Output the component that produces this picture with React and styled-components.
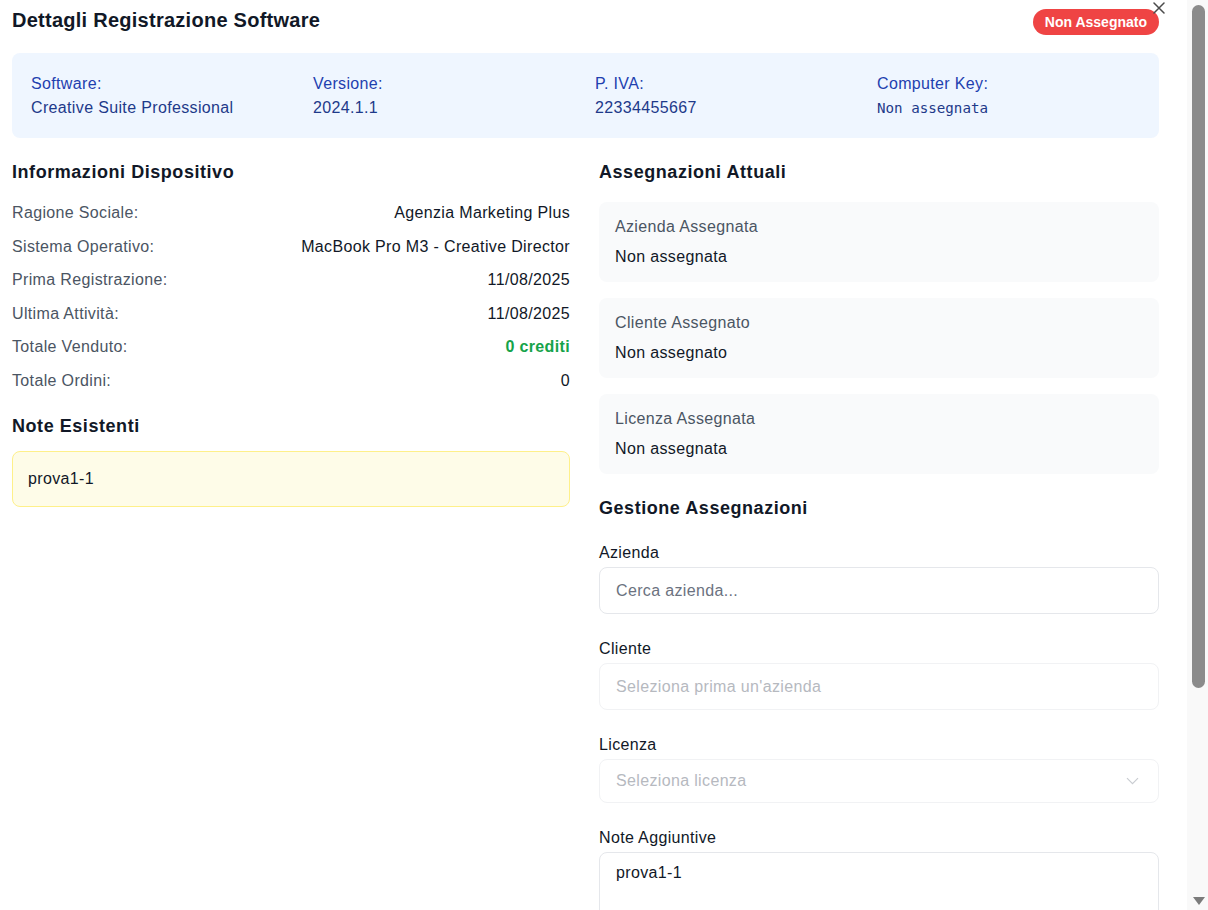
import React from "react";
import styled, { createGlobalStyle } from "styled-components";

const GlobalStyle = createGlobalStyle`
  html, body {
    margin: 0;
    padding: 0;
    background: #fff;
  }
  body {
    font-family: "Liberation Sans", Arial, sans-serif;
    font-size: 16px;
    letter-spacing: 0.35px;
    color: #111827;
  }
  * {
    box-sizing: border-box;
  }
`;

const Page = styled.div`
  display: flex;
  height: 100vh;
  overflow: hidden;
  background: #fff;
`;

const Main = styled.div`
  flex: 1;
  overflow: hidden;
`;

const ScrollTrack = styled.div`
  width: 21px;
  display: flex;
  flex-direction: column;
  align-items: center;
  padding: 5px 0 5px 2px;
  background: #f9f9f9;
`;

const ScrollThumb = styled.div`
  width: 13px;
  height: 683px;
  border-radius: 7px;
  background: #8b8b8b;
`;

const ScrollArrow = styled.div`
  margin-top: auto;
  width: 0;
  height: 0;
  border-left: 6.5px solid transparent;
  border-right: 6.5px solid transparent;
  border-top: 8px solid #7b7b7b;
`;

const Dialog = styled.div`
  position: relative;
  width: 1147px;
  margin-left: 12px;
  padding: 6px 0 120px;
`;

const Header = styled.div`
  display: flex;
  align-items: center;
  justify-content: space-between;
  height: 28px;
`;

const Title = styled.h2`
  margin: 0;
  font-size: 20px;
  line-height: 28px;
  font-weight: 700;
  letter-spacing: 0.26px;
  color: #111827;
`;

const Badge = styled.span`
  margin-top: 3px;
  padding: 3px 12px;
  border-radius: 999px;
  background: #ef4444;
  color: #fff;
  font-size: 14px;
  line-height: 20px;
  font-weight: 700;
  letter-spacing: 0;
`;

const Close = styled.button`
  position: absolute;
  top: 2px;
  right: -6px;
  width: 12px;
  height: 12px;
  padding: 0;
  border: 0;
  background: transparent;
  color: #4b4b4b;
  cursor: pointer;
  svg {
    display: block;
  }
`;

const InfoBox = styled.div`
  margin-top: 19px;
  display: grid;
  grid-template-columns: repeat(4, 1fr);
  gap: 16px;
  padding: 19px 16px 18px 19px;
  background: #eff6ff;
  border-radius: 8px;
`;

const InfoLabel = styled.div`
  color: #1e40af;
  line-height: 24px;
`;

const InfoValue = styled.div`
  color: #1e3a8a;
  line-height: 24px;
  letter-spacing: ${(p) => (p.$mono ? "0" : "0.35px")};
  font-family: ${(p) =>
    p.$mono ? '"DejaVu Sans Mono", "Liberation Mono", monospace' : "inherit"};
  font-size: ${(p) => (p.$mono ? "14.2px" : "16px")};
`;

const Columns = styled.div`
  margin-top: 20px;
  display: grid;
  grid-template-columns: 558px 560px;
  column-gap: 29px;
  align-items: start;
`;

const Column = styled.div`
  display: flex;
  flex-direction: column;
`;

const SectionTitle = styled.h3`
  margin: ${(p) => p.$mt || "0"} 0 ${(p) => p.$mb || "16px"};
  font-size: 18px;
  line-height: 28px;
  font-weight: 700;
  letter-spacing: 0.55px;
  color: #111827;
`;

const Rows = styled.div`
  display: flex;
  flex-direction: column;
  gap: 9.6px;
`;

const Row = styled.div`
  display: flex;
  justify-content: space-between;
  line-height: 24px;
`;

const RowLabel = styled.span`
  color: #4b5563;
`;

const RowValue = styled.span`
  color: ${(p) => (p.$green ? "#16a34a" : "#111827")};
  font-weight: ${(p) => (p.$green ? 700 : 400)};
`;

const NoteBox = styled.div`
  padding: 15px;
  background: #fefce8;
  border: 1px solid #fef08a;
  border-radius: 8px;
  line-height: 24px;
  color: #111827;
`;

const Cards = styled.div`
  display: flex;
  flex-direction: column;
  gap: 16px;
`;

const Card = styled.div`
  padding: 15px 16px 13px;
  background: #f9fafb;
  border-radius: 8px;
`;

const CardLabel = styled.div`
  color: #4b5563;
  line-height: 20px;
`;

const CardValue = styled.div`
  margin-top: 8px;
  line-height: 24px;
  color: #111827;
`;

const Fields = styled.div`
  display: flex;
  flex-direction: column;
  gap: 25px;
`;

const Field = styled.div`
  display: flex;
  flex-direction: column;
`;

const Label = styled.label`
  line-height: 20px;
  margin-bottom: 4px;
  color: #111827;
`;

const Input = styled.input`
  height: 47px;
  padding: 0 16px;
  border: 1px solid #e5e7eb;
  border-radius: 8px;
  background: #fff;
  font: inherit;
  letter-spacing: 0.35px;
  color: #111827;
  outline: none;
  &::placeholder {
    color: #6b7280;
  }
  &:disabled {
    border-color: #f1f2f4;
    &::placeholder {
      color: #b6b9bf;
    }
  }
`;

const Select = styled.div`
  display: flex;
  align-items: center;
  justify-content: space-between;
  height: 44px;
  padding: 0 19px 0 16px;
  border: 1px solid #f1f2f4;
  border-radius: 8px;
  color: #b6b9bf;
`;

const TextArea = styled.textarea`
  height: 110px;
  padding: 8px 16px;
  border: 1px solid #e5e7eb;
  border-radius: 8px;
  font: inherit;
  letter-spacing: 0.35px;
  line-height: 24px;
  color: #111827;
  resize: none;
  outline: none;
`;

const deviceRows = [
  ["Ragione Sociale:", "Agenzia Marketing Plus"],
  ["Sistema Operativo:", "MacBook Pro M3 - Creative Director"],
  ["Prima Registrazione:", "11/08/2025"],
  ["Ultima Attività:", "11/08/2025"],
  ["Totale Venduto:", "0 crediti", true],
  ["Totale Ordini:", "0"],
];

const assignments = [
  ["Azienda Assegnata", "Non assegnata"],
  ["Cliente Assegnato", "Non assegnato"],
  ["Licenza Assegnata", "Non assegnata"],
];

export default function App() {
  return (
    <>
      <GlobalStyle />
      <Page>
        <Main>
          <Dialog>
            <Close aria-label="Chiudi">
              <svg width="12" height="12" viewBox="0 0 12 12">
                <path
                  d="M1 1 11 11M11 1 1 11"
                  stroke="currentColor"
                  strokeWidth="1.5"
                  strokeLinecap="round"
                />
              </svg>
            </Close>
            <Header>
              <Title>Dettagli Registrazione Software</Title>
              <Badge>Non Assegnato</Badge>
            </Header>

            <InfoBox>
              <div>
                <InfoLabel>Software:</InfoLabel>
                <InfoValue>Creative Suite Professional</InfoValue>
              </div>
              <div>
                <InfoLabel>Versione:</InfoLabel>
                <InfoValue>2024.1.1</InfoValue>
              </div>
              <div>
                <InfoLabel>P. IVA:</InfoLabel>
                <InfoValue>22334455667</InfoValue>
              </div>
              <div>
                <InfoLabel>Computer Key:</InfoLabel>
                <InfoValue $mono>Non assegnata</InfoValue>
              </div>
            </InfoBox>

            <Columns>
              <Column>
                <SectionTitle $mb="15px">Informazioni Dispositivo</SectionTitle>
                <Rows>
                  {deviceRows.map(([label, value, green]) => (
                    <Row key={label}>
                      <RowLabel>{label}</RowLabel>
                      <RowValue $green={green}>{value}</RowValue>
                    </Row>
                  ))}
                </Rows>
                <SectionTitle $mt="19px" $mb="11px">
                  Note Esistenti
                </SectionTitle>
                <NoteBox>prova1-1</NoteBox>
              </Column>

              <Column>
                <SectionTitle>Assegnazioni Attuali</SectionTitle>
                <Cards>
                  {assignments.map(([label, value]) => (
                    <Card key={label}>
                      <CardLabel>{label}</CardLabel>
                      <CardValue>{value}</CardValue>
                    </Card>
                  ))}
                </Cards>
                <SectionTitle $mt="20px" $mb="21px">
                  Gestione Assegnazioni
                </SectionTitle>
                <Fields>
                  <Field>
                    <Label>Azienda</Label>
                    <Input placeholder="Cerca azienda..." />
                  </Field>
                  <Field>
                    <Label>Cliente</Label>
                    <Input placeholder="Seleziona prima un'azienda" disabled />
                  </Field>
                  <Field>
                    <Label>Licenza</Label>
                    <Select>
                      <span>Seleziona licenza</span>
                      <svg width="13" height="8" viewBox="0 0 13 8">
                        <path
                          d="M1 1.2 6.5 6.7 12 1.2"
                          fill="none"
                          stroke="#c9ccd1"
                          strokeWidth="1.2"
                        />
                      </svg>
                    </Select>
                  </Field>
                  <Field>
                    <Label>Note Aggiuntive</Label>
                    <TextArea defaultValue="prova1-1" />
                  </Field>
                </Fields>
              </Column>
            </Columns>
          </Dialog>
        </Main>
        <ScrollTrack>
          <ScrollThumb />
          <ScrollArrow />
        </ScrollTrack>
      </Page>
    </>
  );
}
